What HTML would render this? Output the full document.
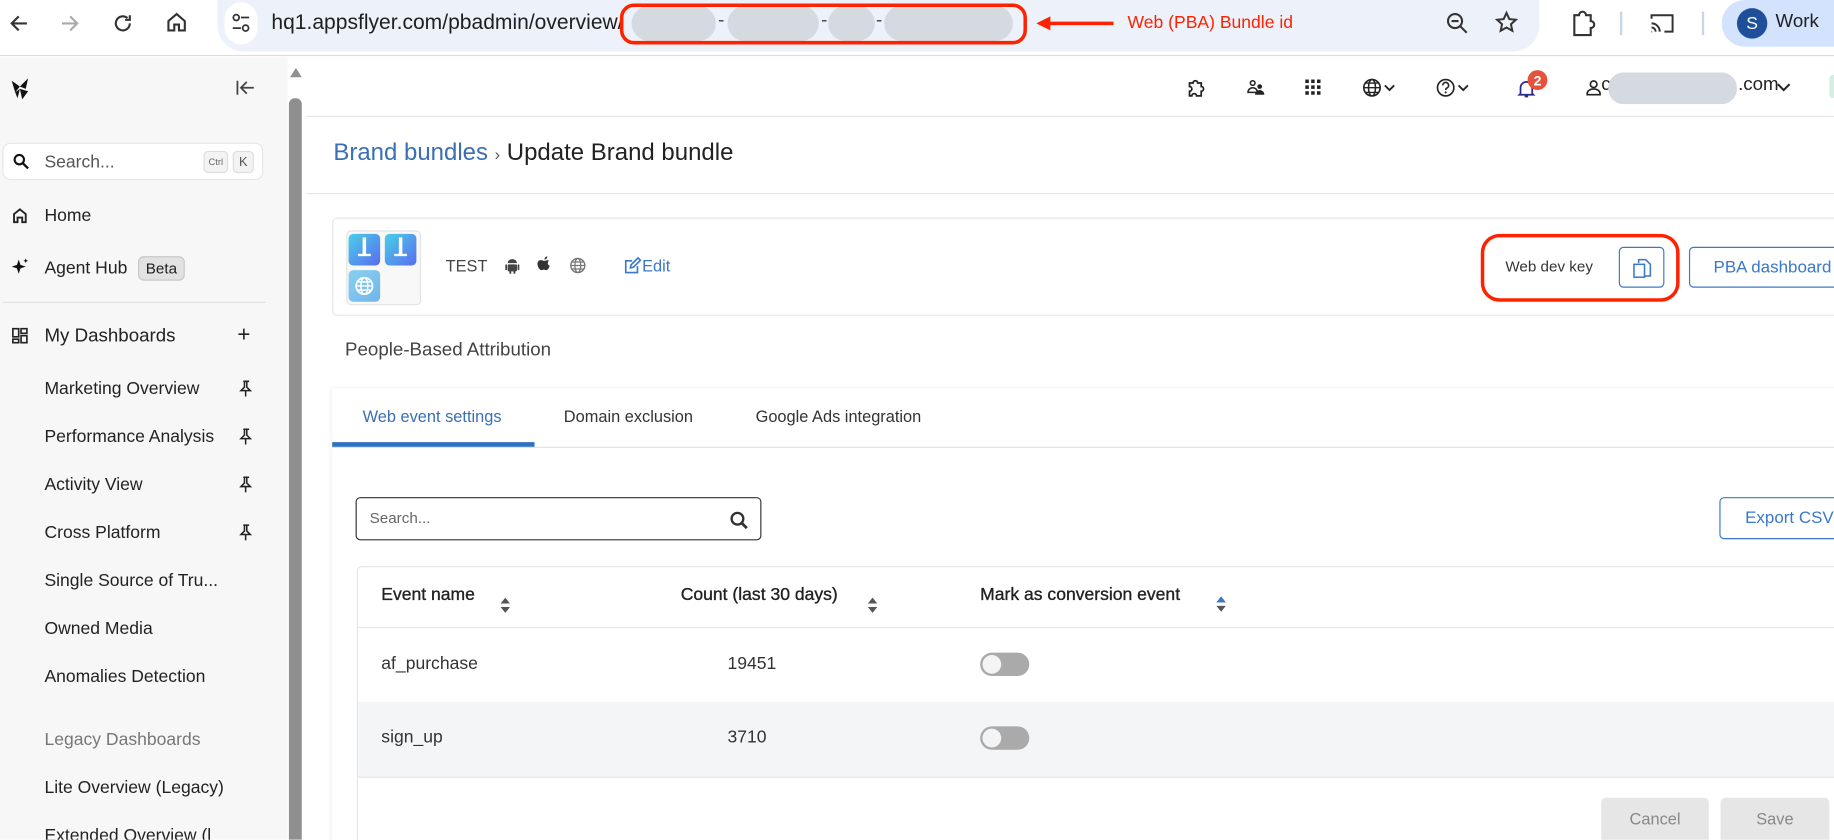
<!DOCTYPE html>
<html><head><meta charset="utf-8"><style>
*{box-sizing:border-box;margin:0;padding:0}
html,body{width:1834px;height:840px;overflow:hidden;background:#fff;font-family:"Liberation Sans",sans-serif}
#w{position:absolute;left:0;top:0;width:1568px;height:718px;transform:scale(1.16964);transform-origin:0 0;overflow:hidden;background:#fff}
.a{position:absolute}
.t{position:absolute;white-space:nowrap}
svg{position:absolute;overflow:visible}
.side{font-size:15px;color:#222}
.btn{position:absolute;border:1px solid #3a78c9;border-radius:4px;background:#fff;color:#3a78c9;font-size:15px;display:flex;align-items:center;justify-content:center}
.tog{position:absolute;width:42px;height:20px;border-radius:10px;background:#aaa}
.tog::after{content:"";position:absolute;left:2px;top:2px;width:16px;height:16px;border-radius:50%;background:#f4f4f4}
.sort{position:absolute;width:8px;height:14px}
.sort::before{content:"";position:absolute;left:0;top:0;border-left:4px solid transparent;border-right:4px solid transparent;border-bottom:5px solid #555}
.sort::after{content:"";position:absolute;left:0;top:8px;border-left:4px solid transparent;border-right:4px solid transparent;border-top:5px solid #555}
.th{font-size:15px;color:#222;-webkit-text-stroke:.3px #222}
</style></head><body><div id="w">

<div class="a" style="left:0;top:0;width:1568px;height:48px;background:#fff;border-bottom:1px solid #dcdcdc"></div>
<svg style="left:6px;top:10px" width="20" height="20" viewBox="0 0 20 20"><path d="M17 10H4M10 4L4 10l6 6" fill="none" stroke="#333" stroke-width="1.8"/></svg>
<svg style="left:50px;top:10px" width="20" height="20" viewBox="0 0 20 20"><path d="M3 10h13M10 4l6 6-6 6" fill="none" stroke="#aaa" stroke-width="1.8"/></svg>
<svg style="left:95px;top:10px" width="20" height="20" viewBox="0 0 20 20"><path d="M16 10a6 6 0 1 1-2-4.5M16 3v4h-4" fill="none" stroke="#333" stroke-width="1.8"/></svg>
<svg style="left:141px;top:9px" width="20" height="20" viewBox="0 0 20 20"><path d="M3 9l7-6 7 6v8h-5v-5H8v5H3z" fill="none" stroke="#333" stroke-width="1.8"/></svg>
<div class="a" style="left:186px;top:0;width:1130px;height:44px;border-radius:0 0 22px 22px;background:#edf2fa"></div>
<div class="a" style="left:192px;top:2px;width:28px;height:36px;border-radius:14px;background:#fff"></div>
<svg style="left:198px;top:11px" width="16" height="18" viewBox="0 0 16 18"><circle cx="4" cy="4" r="2.5" fill="none" stroke="#333" stroke-width="1.5"/><path d="M8 4h7M1 13h7" stroke="#333" stroke-width="1.5"/><circle cx="12" cy="13" r="2.5" fill="none" stroke="#333" stroke-width="1.5"/></svg>
<div class="t" style="left:232px;top:9px;font-size:18px;color:#1f1f1f">hq1.appsflyer.com/pbadmin/overview/</div>
<div class="a" style="left:540px;top:5px;width:72px;height:30px;border-radius:15px;background:#d5d9e0"></div>
<div class="t" style="left:614px;top:9px;font-size:16px;color:#444">-</div>
<div class="a" style="left:622px;top:5px;width:78px;height:30px;border-radius:15px;background:#d5d9e0"></div>
<div class="t" style="left:702px;top:9px;font-size:16px;color:#444">-</div>
<div class="a" style="left:708px;top:5px;width:40px;height:30px;border-radius:15px;background:#d5d9e0"></div>
<div class="t" style="left:749px;top:9px;font-size:16px;color:#444">-</div>
<div class="a" style="left:756px;top:5px;width:110px;height:30px;border-radius:15px;background:#d5d9e0"></div>
<div class="a" style="left:530px;top:3px;width:348px;height:35px;border:3px solid #ff2200;border-radius:12px"></div>
<svg style="left:886px;top:14px" width="66" height="12" viewBox="0 0 66 12"><path d="M66 6H10" stroke="#ff2200" stroke-width="3"/><path d="M0 6l12-6v12z" fill="#ff2200"/></svg>
<div class="t" style="left:964px;top:11px;font-size:15px;color:#ff2200">Web (PBA) Bundle id</div>
<svg style="left:1236px;top:10px" width="20" height="20" viewBox="0 0 20 20"><circle cx="8" cy="8" r="6" fill="none" stroke="#333" stroke-width="1.8"/><path d="M12.5 12.5L18 18M5 8h6" stroke="#333" stroke-width="1.8"/></svg>
<svg style="left:1278px;top:9px" width="20" height="20" viewBox="0 0 20 20"><path d="M10 2l2.4 5.3 5.6.6-4.2 3.8 1.2 5.6L10 14.5l-5 2.8 1.2-5.6L2 7.9l5.6-.6z" fill="none" stroke="#333" stroke-width="1.7"/></svg>
<svg style="left:1342px;top:8px" width="22" height="24" viewBox="0 0 22 24"><path d="M4 5h4a3 3 0 0 1 6 0h4v5a3 3 0 0 1 0 6v6H4z" fill="none" stroke="#333" stroke-width="1.8"/></svg>
<div class="a" style="left:1385px;top:10px;width:2px;height:20px;background:#c8d4e8"></div>
<svg style="left:1410px;top:11px" width="22" height="18" viewBox="0 0 22 18"><path d="M2 5V2h18v14h-7M2 9a7 7 0 0 1 7 7M2 12.5A3.5 3.5 0 0 1 5.5 16M2 16h.5" fill="none" stroke="#333" stroke-width="1.7"/></svg>
<div class="a" style="left:1455px;top:10px;width:2px;height:20px;background:#c8d4e8"></div>
<div class="a" style="left:1472px;top:0;width:100px;height:40px;border-radius:20px 0 0 20px;background:#d3e3fd"></div>
<div class="a" style="left:1485px;top:7px;width:26px;height:26px;border-radius:50%;background:#1f4f99;color:#fff;font-size:15px;display:flex;align-items:center;justify-content:center">S</div>
<div class="t" style="left:1518px;top:10px;font-size:16px;color:#1f1f1f">Work</div>

<div class="a" style="left:0;top:49px;width:246px;height:669px;background:#f7f7f7"></div>
<div class="a" style="left:246px;top:49px;width:16px;height:669px;background:#fff"></div>
<div class="a" style="left:247px;top:84px;width:11px;height:634px;background:#8f8f8f;border-radius:5px 5px 0 0"></div>
<svg style="left:248px;top:58px" width="10" height="8" viewBox="0 0 10 8"><path d="M5 0l5 8H0z" fill="#8f8f8f"/></svg>
<svg style="left:8px;top:65px" width="20" height="22" viewBox="0 0 20 22"><path d="M2 4l7 5-4 5zM9 9l7-7-2 9zM9 11l7 2-5 7zM9 11l-4 3 2 5z" fill="#111"/></svg>
<svg style="left:202px;top:68px" width="16" height="14" viewBox="0 0 16 14"><path d="M1 1v12M15 7H5M9 2L4 7l5 5" fill="none" stroke="#444" stroke-width="1.5"/></svg>
<div class="a" style="left:2px;top:122px;width:223px;height:32px;background:#fff;border:1px solid #e6e6e6;border-radius:7px"></div>
<svg style="left:11px;top:131px" width="14" height="14" viewBox="0 0 14 14"><circle cx="5.5" cy="5.5" r="4" fill="none" stroke="#111" stroke-width="1.8"/><path d="M8.5 8.5L13 13" stroke="#111" stroke-width="2"/></svg>
<div class="t" style="left:38px;top:130px;font-size:15px;color:#555">Search...</div>
<div class="a" style="left:174px;top:129px;width:21px;height:19px;border:1px solid #ddd;border-radius:4px;background:#f3f3f3;font-size:8px;color:#666;display:flex;align-items:center;justify-content:center">Ctrl</div>
<div class="a" style="left:199px;top:129px;width:18px;height:19px;border:1px solid #ddd;border-radius:4px;background:#f3f3f3;font-size:11px;color:#555;display:flex;align-items:center;justify-content:center">K</div>
<svg style="left:10px;top:177px" width="14" height="14" viewBox="0 0 14 14"><path d="M2 6l5-4 5 4v7H9V9H5v4H2z" fill="none" stroke="#222" stroke-width="1.6"/></svg>
<div class="t side" style="left:38px;top:176px">Home</div>
<svg style="left:9px;top:220px" width="16" height="16" viewBox="0 0 16 16"><path d="M7 2l1.5 4.5L13 8l-4.5 1.5L7 14l-1.5-4.5L1 8l4.5-1.5z" fill="#111"/><path d="M13 1l.6 1.4L15 3l-1.4.6L13 5l-.6-1.4L11 3l1.4-.6z" fill="#111"/></svg>
<div class="t side" style="left:38px;top:221px">Agent Hub</div>
<div class="a" style="left:118px;top:219px;width:40px;height:21px;border:1px solid #c8c8c8;border-radius:5px;background:#e2e2e2;font-size:13px;color:#222;display:flex;align-items:center;justify-content:center">Beta</div>
<div class="a" style="left:2px;top:258px;width:225px;height:1px;background:#e2e2e2"></div>
<svg style="left:10px;top:280px" width="14" height="14" viewBox="0 0 14 14"><path d="M1 1h5v7H1zM8 1h5v4H8zM8 7h5v6H8zM1 10h5v3H1z" fill="none" stroke="#222" stroke-width="1.4"/></svg>
<div class="t side" style="left:38px;top:279px;font-size:16px">My Dashboards</div>
<div class="t" style="left:203px;top:276px;font-size:19px;color:#222">+</div>
<div class="t side" style="left:38px;top:324px">Marketing Overview</div>
<div class="t side" style="left:38px;top:365px">Performance Analysis</div>
<div class="t side" style="left:38px;top:406px">Activity View</div>
<div class="t side" style="left:38px;top:447px">Cross Platform</div>
<div class="t side" style="left:38px;top:488px">Single Source of Tru...</div>
<div class="t side" style="left:38px;top:529px">Owned Media</div>
<div class="t side" style="left:38px;top:570px">Anomalies Detection</div>
<div class="t side" style="left:38px;top:624px;color:#777">Legacy Dashboards</div>
<div class="t side" style="left:38px;top:665px">Lite Overview (Legacy)</div>
<div class="t side" style="left:38px;top:706px">Extended Overview (l</div>
<svg style="left:204px;top:325px" width="12" height="14" viewBox="0 0 12 14"><path d="M4 1h5M5 1v5L2 9h8L7 6V1M6 9v5" fill="none" stroke="#222" stroke-width="1.3"/></svg>
<svg style="left:204px;top:366px" width="12" height="14" viewBox="0 0 12 14"><path d="M4 1h5M5 1v5L2 9h8L7 6V1M6 9v5" fill="none" stroke="#222" stroke-width="1.3"/></svg>
<svg style="left:204px;top:407px" width="12" height="14" viewBox="0 0 12 14"><path d="M4 1h5M5 1v5L2 9h8L7 6V1M6 9v5" fill="none" stroke="#222" stroke-width="1.3"/></svg>
<svg style="left:204px;top:448px" width="12" height="14" viewBox="0 0 12 14"><path d="M4 1h5M5 1v5L2 9h8L7 6V1M6 9v5" fill="none" stroke="#222" stroke-width="1.3"/></svg>

<div class="a" style="left:262px;top:99px;width:1306px;height:1px;background:#e6e6e6"></div>
<svg style="left:1014px;top:67px" width="16" height="17" viewBox="0 0 16 17"><path d="M3 4h3a2 2 0 0 1 4 0h3v3a2 2 0 0 1 0 4v4H9a2 2 0 0 0-4 0H3v-4a2 2 0 0 0 0-4z" fill="none" stroke="#222" stroke-width="1.5"/></svg>
<svg style="left:1066px;top:68px" width="16" height="14" viewBox="0 0 16 14"><circle cx="5" cy="3" r="2" fill="none" stroke="#222" stroke-width="1.3"/><path d="M1 11a4 4 0 0 1 8 0z" fill="none" stroke="#222" stroke-width="1.3"/><circle cx="11" cy="6" r="2" fill="#222"/><path d="M7 13a4 4 0 0 1 8 0z" fill="#222"/></svg>
<svg style="left:1116px;top:68px" width="13" height="13" viewBox="0 0 13 13" fill="#222"><rect x="0" y="0" width="3" height="3"/><rect x="5" y="0" width="3" height="3"/><rect x="10" y="0" width="3" height="3"/><rect x="0" y="5" width="3" height="3"/><rect x="5" y="5" width="3" height="3"/><rect x="10" y="5" width="3" height="3"/><rect x="0" y="10" width="3" height="3"/><rect x="5" y="10" width="3" height="3"/><rect x="10" y="10" width="3" height="3"/></svg>
<svg style="left:1165px;top:66px" width="30" height="18" viewBox="0 0 30 18"><circle cx="8" cy="9" r="7" fill="none" stroke="#222" stroke-width="1.4"/><ellipse cx="8" cy="9" rx="3" ry="7" fill="none" stroke="#222" stroke-width="1.3"/><path d="M1 9h14M2 5h12M2 13h12" stroke="#222" stroke-width="1.2"/><path d="M19 7l4 4 4-4" fill="none" stroke="#222" stroke-width="1.6"/></svg>
<svg style="left:1228px;top:66px" width="30" height="18" viewBox="0 0 30 18"><circle cx="8" cy="9" r="7" fill="none" stroke="#222" stroke-width="1.4"/><path d="M5.5 7a2.5 2.5 0 1 1 3.5 2.3c-.8.4-1 .9-1 1.7" fill="none" stroke="#222" stroke-width="1.4"/><circle cx="8" cy="13" r=".9" fill="#222"/><path d="M19 7l4 4 4-4" fill="none" stroke="#222" stroke-width="1.6"/></svg>
<svg style="left:1298px;top:68px" width="14" height="16" viewBox="0 0 14 16"><path d="M2 12V7a5 5 0 0 1 10 0v5l1 1H1zM5.5 14.5h3" fill="none" stroke="#2a2a8a" stroke-width="1.5"/></svg>
<div class="a" style="left:1306px;top:60px;width:17px;height:17px;border-radius:50%;background:#e5533d;color:#fff;font-size:12px;font-weight:bold;display:flex;align-items:center;justify-content:center">2</div>
<svg style="left:1356px;top:68px" width="13" height="14" viewBox="0 0 13 14"><circle cx="6.5" cy="4" r="2.8" fill="none" stroke="#222" stroke-width="1.4"/><path d="M1 13v-1a5.5 4 0 0 1 11 0v1z" fill="none" stroke="#222" stroke-width="1.4"/></svg>
<div class="t" style="left:1369px;top:64px;font-size:16px;color:#222">c</div>
<div class="a" style="left:1375px;top:62px;width:110px;height:27px;border-radius:13px;background:#d5d9e0"></div>
<div class="t" style="left:1486px;top:64px;font-size:16px;color:#222">.com</div>
<svg style="left:1519px;top:71px" width="12" height="8" viewBox="0 0 12 8"><path d="M1 1l5 5 5-5" fill="none" stroke="#222" stroke-width="1.7"/></svg>
<div class="a" style="left:1564px;top:64px;width:6px;height:20px;border-radius:3px;background:#d4f0e4"></div>

<div class="t" style="left:285px;top:119px;font-size:20.5px;color:#3a6fb5">Brand bundles <span style="font-size:14px;color:#555">›</span> <span style="color:#222">Update Brand bundle</span></div>
<div class="a" style="left:262px;top:165px;width:1306px;height:1px;background:#e6e6e6"></div>

<div class="a" style="left:284px;top:186px;width:1290px;height:84px;border:1px solid #e6e6e6;border-radius:4px"></div>
<div class="a" style="left:296px;top:197px;width:64px;height:64px;border:1px solid #e3e3e3;border-radius:4px;background:#f8f8f8"></div>
<div class="a" style="left:298px;top:200px;width:27px;height:27px;border-radius:4px;background:linear-gradient(135deg,#48d0e8,#5a6cf0)"></div>
<div class="a" style="left:329px;top:200px;width:27px;height:27px;border-radius:4px;background:linear-gradient(135deg,#48d0e8,#5a6cf0)"></div>
<div class="a" style="left:310px;top:203px;width:3px;height:15px;background:#fff"></div>
<div class="a" style="left:341px;top:203px;width:3px;height:15px;background:#fff"></div>
<div class="a" style="left:306px;top:217px;width:11px;height:2px;background:#fff"></div>
<div class="a" style="left:337px;top:217px;width:11px;height:2px;background:#fff"></div>
<div class="a" style="left:298px;top:231px;width:27px;height:27px;border-radius:4px;background:linear-gradient(135deg,#8bd0f0,#6fb6ea)"></div>
<svg style="left:303px;top:236px" width="17" height="17" viewBox="0 0 17 17"><circle cx="8.5" cy="8.5" r="7" fill="none" stroke="#fff" stroke-width="1.5"/><ellipse cx="8.5" cy="8.5" rx="3" ry="7" fill="none" stroke="#fff" stroke-width="1.3"/><path d="M1.5 8.5h14M2.5 5h12M2.5 12h12" stroke="#fff" stroke-width="1.2"/></svg>
<div class="t" style="left:381px;top:219px;font-size:14px;color:#444">TEST</div>
<svg style="left:432px;top:220px" width="12" height="14" viewBox="0 0 12 14"><path d="M2 5a4 3.5 0 0 1 8 0z" fill="#444"/><rect x="2" y="6" width="8" height="6" rx="1" fill="#444"/><rect x="0" y="6" width="1.5" height="5" rx=".7" fill="#444"/><rect x="10.5" y="6" width="1.5" height="5" rx=".7" fill="#444"/><rect x="3.5" y="11" width="1.6" height="3" fill="#444"/><rect x="7" y="11" width="1.6" height="3" fill="#444"/></svg>
<svg style="left:459px;top:219px" width="13" height="15" viewBox="0 0 13 15"><path d="M6.5 4c1-.1 2.5-1 4-.2-1.7 1-1.5 3.8.5 4.4-.5 1.5-1.6 3.8-3 3.8-.8 0-1.2-.5-2-.5s-1.3.5-2 .5C2.3 12 .5 9 .5 6.6.5 4.3 2.2 3.2 3.6 3.4c.9 0 1.7.6 2.9.6zM6.5 3c0-1.4 1-2.6 2.4-2.8.1 1.4-1 2.7-2.4 2.8z" fill="#333"/></svg>
<svg style="left:487px;top:220px" width="14" height="14" viewBox="0 0 14 14"><circle cx="7" cy="7" r="6" fill="none" stroke="#777" stroke-width="1.2"/><ellipse cx="7" cy="7" rx="2.5" ry="6" fill="none" stroke="#777" stroke-width="1.1"/><path d="M1 7h12M2 4h10M2 10h10" stroke="#777" stroke-width="1"/></svg>
<svg style="left:534px;top:220px" width="14" height="14" viewBox="0 0 14 14"><path d="M11 7.5V13H1V3h5.5" fill="none" stroke="#3a78c9" stroke-width="1.4"/><path d="M5 9l.5-2.5L11.5.5l2 2-6 6z" fill="none" stroke="#3a78c9" stroke-width="1.4"/></svg>
<div class="t" style="left:549px;top:219px;font-size:14px;color:#3a78c9">Edit</div>
<div class="a" style="left:1266px;top:200px;width:170px;height:58px;border:3px solid #ff2200;border-radius:16px"></div>
<div class="t" style="left:1287px;top:220px;font-size:13px;color:#333">Web dev key</div>
<div class="btn" style="left:1384px;top:211px;width:39px;height:35px"><svg style="position:static" width="16" height="18" viewBox="0 0 16 18"><path d="M5 5V2h6l4 4v10h-6" fill="none" stroke="#3a78c9" stroke-width="1.3"/><rect x="1" y="6" width="9" height="11" fill="#fff" stroke="#3a78c9" stroke-width="1.3"/></svg></div>
<div class="btn" style="left:1444px;top:211px;width:130px;height:35px;justify-content:flex-start;padding-left:20px;font-size:14.5px">PBA dashboard</div>

<div class="t" style="left:295px;top:291px;font-size:16px;color:#444">People-Based Attribution</div>

<div class="a" style="left:284px;top:332px;width:1290px;height:400px;background:#fff;box-shadow:0 0 4px rgba(0,0,0,.08)"></div>
<div class="t" style="left:310px;top:348px;font-size:14px;color:#3a6fb5">Web event settings</div>
<div class="t" style="left:482px;top:348px;font-size:14px;color:#333">Domain exclusion</div>
<div class="t" style="left:646px;top:348px;font-size:14px;color:#333">Google Ads integration</div>
<div class="a" style="left:284px;top:382px;width:1290px;height:1px;background:#e2e2e2"></div>
<div class="a" style="left:284px;top:378px;width:173px;height:4px;background:#3070c0"></div>

<div class="a" style="left:304px;top:425px;width:347px;height:37px;border:1px solid #333;border-radius:4px"></div>
<div class="t" style="left:316px;top:435px;font-size:13px;color:#666">Search...</div>
<svg style="left:624px;top:437px" width="16" height="16" viewBox="0 0 16 16"><circle cx="6.5" cy="6.5" r="5" fill="none" stroke="#333" stroke-width="2"/><path d="M10 10l4.5 4.5" stroke="#333" stroke-width="2.4"/></svg>
<div class="btn" style="left:1470px;top:425px;width:104px;height:36px;justify-content:flex-start;padding-left:21px;font-size:14.5px">Export CSV</div>

<div class="a" style="left:305px;top:484px;width:1270px;height:240px;border:1px solid #e6e6e6;border-radius:4px"></div>
<div class="t th" style="left:326px;top:500px">Event name</div>
<div class="sort" style="left:428px;top:511px"></div>
<div class="t th" style="left:582px;top:500px">Count (last 30 days)</div>
<div class="sort" style="left:742px;top:511px"></div>
<div class="t th" style="left:838px;top:500px">Mark as conversion event</div>
<div class="sort" style="left:1040px;top:510px"></div>
<svg style="left:1040px;top:510px" width="8" height="5" viewBox="0 0 8 5"><path d="M4 0l4 5H0z" fill="#3a78c9"/></svg>
<div class="a" style="left:306px;top:536px;width:1268px;height:1px;background:#e6e6e6"></div>
<div class="t" style="left:326px;top:559px;font-size:15px;color:#333">af_purchase</div>
<div class="t" style="left:622px;top:559px;font-size:15px;color:#333">19451</div>
<div class="tog" style="left:838px;top:558px"></div>
<div class="a" style="left:306px;top:600px;width:1268px;height:64px;background:#f4f5f7"></div>
<div class="t" style="left:326px;top:622px;font-size:15px;color:#333">sign_up</div>
<div class="t" style="left:622px;top:622px;font-size:15px;color:#333">3710</div>
<div class="tog" style="left:838px;top:621px"></div>
<div class="a" style="left:306px;top:664px;width:1268px;height:1px;background:#e6e6e6"></div>
<div class="a" style="left:1369px;top:682px;width:92px;height:40px;border-radius:4px;background:#e6e6e6;color:#888;font-size:14px;display:flex;align-items:center;justify-content:center;padding-bottom:4px">Cancel</div>
<div class="a" style="left:1471px;top:682px;width:93px;height:40px;border-radius:4px;background:#e6e6e6;color:#888;font-size:14px;display:flex;align-items:center;justify-content:center;padding-bottom:4px">Save</div>

</div></body></html>
